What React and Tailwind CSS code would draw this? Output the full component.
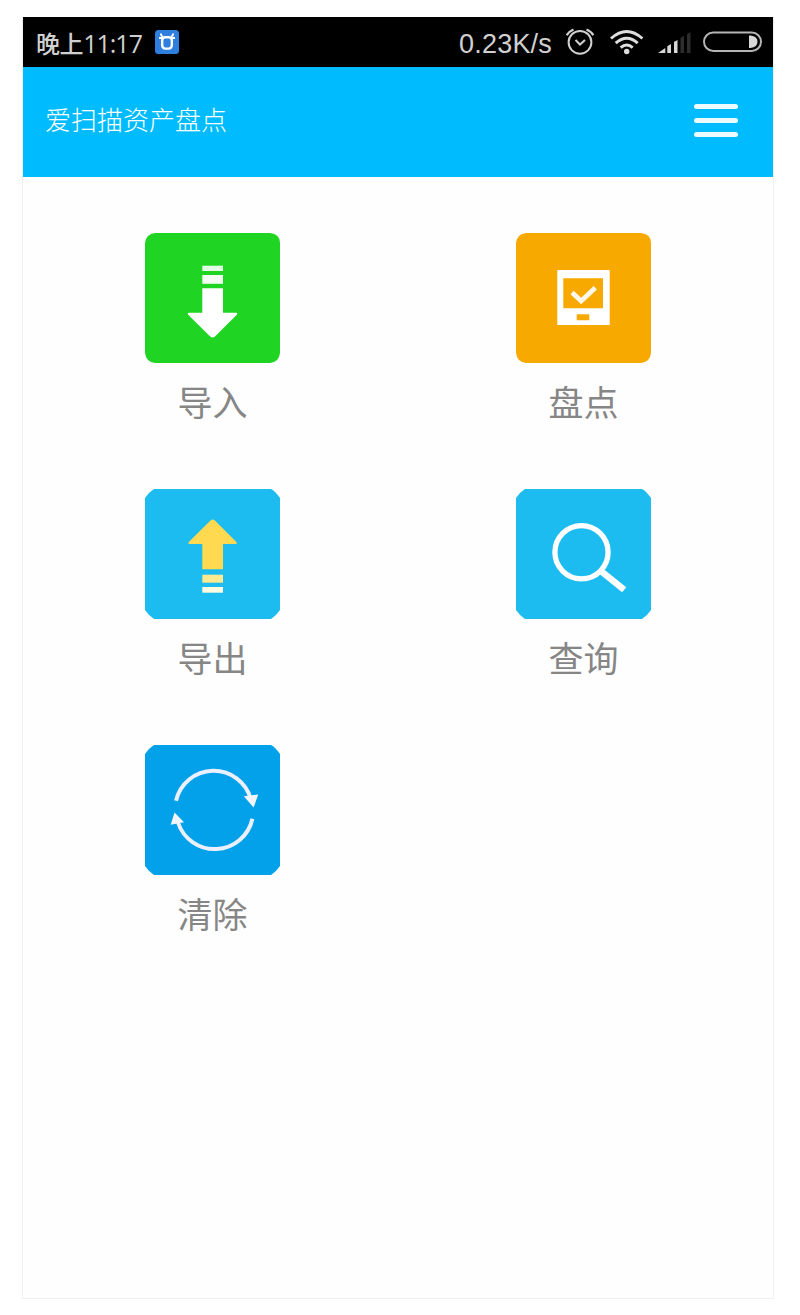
const ROUNDED = 'M10 0H125Q135 1 135 10V120Q134 129 125 130H10Q1 129 0 120V10Q1 1 10 0Z';
const CHAMFERED = 'M9 0H126Q130 2 135 9V121Q131 127 126 130H9Q4 127 0 121V9Q4 3 9 0Z';

function ImportIcon() {
  return (
    <g fill="#fff">
      <rect x="57.3" y="32.7" width="20.7" height="5.3" opacity=".88" />
      <rect x="57.3" y="42" width="20.7" height="8.8" opacity=".95" />
      <path d="M57.3 55.3H78V79.7H91.5Q93 80.3 91.8 81.8L70 103.5Q67.6 105.5 65.2 103.5L43.2 81.8Q42 80.3 43.5 79.7H57.3Z" />
    </g>
  );
}

function StocktakeIcon() {
  return (
    <g>
      <path fill="#fff" fillRule="evenodd" d="M41.3 37H93.7V92H41.3ZM47.3 45.3V75.3H87V45.3ZM61.5 81.3Q60.7 81.3 60.7 82V86.5Q60.7 87.3 61.5 87.3H72.5Q73.3 87.3 73.3 86.5V82Q73.3 81.3 72.5 81.3Z" />
      <path d="M56 59.5L65.2 68L79.3 54.8" fill="none" stroke="#fff" strokeOpacity=".92" strokeWidth="4.8" />
    </g>
  );
}

function ExportIcon() {
  return (
    <g>
      <path fill="#ffd94f" d="M57.3 80.3V54.9H44Q42.8 54.4 43.8 53L65.8 31.2Q67.7 29.6 69.6 31.2L91.4 53Q92.4 54.4 91.2 54.9H78V80.3Z" />
      <rect x="57.3" y="85.7" width="20.7" height="8" fill="#fde98f" />
      <rect x="57.3" y="98" width="20.7" height="5.7" fill="#fffbe0" />
    </g>
  );
}

function SearchIcon() {
  return (
    <g fill="none" stroke="#fff">
      <circle cx="65.5" cy="63.3" r="26.6" strokeWidth="5.3" />
      <path d="M84.2 81.5L108.2 100.8" strokeWidth="6.6" />
    </g>
  );
}

function ClearIcon() {
  return (
    <g>
      <g fill="none" stroke="#eaf0ff" strokeWidth="4">
        <path d="M31 55.8A38.6 38.6 0 0 1 105.8 54" />
        <path d="M107.4 73.7A38.6 38.6 0 0 1 33 77.5" />
      </g>
      <path fill="#f4f6ff" d="M98.8 51.2L113.2 49.6L108.6 62.5Z" />
      <path fill="#f4f6ff" d="M29.5 67.5L39 77.2L25.7 79.8Z" />
    </g>
  );
}

const ITEMS = [
  { label: '导入', color: '#1fd423', shape: ROUNDED, Icon: ImportIcon },
  { label: '盘点', color: '#f8a900', shape: ROUNDED, Icon: StocktakeIcon },
  { label: '导出', color: '#1cbcf0', shape: CHAMFERED, Icon: ExportIcon },
  { label: '查询', color: '#1cbcf0', shape: CHAMFERED, Icon: SearchIcon },
  { label: '清除', color: '#02a1e9', shape: CHAMFERED, Icon: ClearIcon },
];

function StatusBar() {
  return (
    <div className="flex h-[50px] items-center bg-black pl-[13px] pr-[10px] text-[#d0d0d0]">
      <div className="flex w-[107px] items-baseline whitespace-nowrap pt-0.5 leading-[48px]">
        <span className="font-['Noto_Sans_CJK_SC',sans-serif] text-[24px] font-medium tracking-[-0.4px]">晚上</span>
        <span className="font-['Open_Sans',sans-serif] text-[25px] tracking-[-1px]">11:17</span>
      </div>
      <svg className="ml-[11px]" width="26" height="26" viewBox="0 0 26 26">
        <rect x="1" y="1" width="24" height="24" rx="3.5" fill="#2f80de" />
        <rect x="8.2" y="8.2" width="9.6" height="11.4" rx="3" fill="none" stroke="#fff" strokeWidth="2.4" />
        <path d="M5 9H8.5M17.5 9H21M6.8 4.5Q7 7.2 9 8M19.2 4.5Q19 7.2 17 8" fill="none" stroke="#fff" strokeWidth="2" />
      </svg>
      <span className="ml-auto whitespace-nowrap pt-1 font-['Liberation_Sans',sans-serif] text-[27px] leading-[46px] tracking-[0.2px]">
        0.23K/s
      </span>
      <svg className="ml-[14px]" width="30" height="28" viewBox="0 0 30 28" fill="none" stroke="#d0d0d0" strokeWidth="2">
        <circle cx="14" cy="14.3" r="11.4" />
        <path d="M9.5 12L14 16.5L19 12" />
        <path d="M.8 7.3Q2.8 3.5 7.5 1.5M20.5 1.5Q25.3 3.5 27.3 7.3" strokeWidth="2.3" />
      </svg>
      <svg className="ml-[14px]" width="34" height="26" viewBox="0 0 34 26" fill="none" stroke="#dedede" strokeWidth="3">
        <path d="M1 9.5Q16.7 -4.5 32.4 9.5M5.7 14.2Q16.7 4.2 27.7 14.2M10.7 18.7Q16.7 13.3 22.7 18.7" />
        <circle cx="16.7" cy="22.5" r="2.7" fill="#dedede" stroke="none" />
      </svg>
      <svg className="ml-[14px]" width="34" height="24" viewBox="0 0 34 24">
        <path d="M0 23L7.3 18V23ZM9.3 23V16.2L13 14V23ZM16 23V12L19.5 10V23Z" fill="#d8d8d8" />
        <path d="M22.5 23V8L26 5.8V23ZM29 23V4.3L32.5 2V23Z" fill="#2d2d2d" />
      </svg>
      <svg className="ml-[11px]" width="60" height="22" viewBox="0 0 60 22">
        <rect x="1" y="1.5" width="57" height="18.5" rx="9.25" fill="none" stroke="#b5b5b5" strokeWidth="2" />
        <path d="M46 4.5H47.5Q54.5 5.5 54.5 10.7Q54.5 16 47.5 17H46Z" fill="#d8d8d8" />
      </svg>
    </div>
  );
}

function Header() {
  return (
    <header className="flex h-[110px] items-center justify-between bg-[#00bcff] pl-[22px] pr-[35px]">
      <h1 className="whitespace-nowrap pb-[7px] font-['Noto_Sans_CJK_SC',sans-serif] text-[26px] font-light leading-[40px] text-white">
        爱扫描资产盘点
      </h1>
      <button aria-label="菜单" className="flex flex-col gap-[9px] pb-[3px]">
        <span className="block h-[5px] w-11 rounded-sm bg-[#ecfbff]" />
        <span className="block h-[5px] w-11 rounded-sm bg-[#ecfbff]" />
        <span className="block h-[5px] w-11 rounded-sm bg-[#ecfbff]" />
      </button>
    </header>
  );
}

export default function App() {
  return (
    <div className="h-[1315px] w-[800px] bg-white pl-[22px] pt-[17px]">
      <div className="h-[1282px] w-[752px] border-x border-b border-[#f0f0f0] bg-[#fefefe]">
        <StatusBar />
        <Header />
        <main className="grid grid-cols-[135px_135px] gap-x-[236px] pl-[122px] pt-14">
          {ITEMS.map(({ label, color, shape, Icon }) => (
            <div key={label} className="flex h-64 flex-col items-center">
              <svg width="135" height="130" viewBox="0 0 135 130">
                <path d={shape} fill={color} />
                <Icon />
              </svg>
              <span className="mt-3 whitespace-nowrap font-['Noto_Sans_CJK_SC',sans-serif] text-[35px] leading-[52px] text-[#868686]">
                {label}
              </span>
            </div>
          ))}
        </main>
      </div>
    </div>
  );
}
